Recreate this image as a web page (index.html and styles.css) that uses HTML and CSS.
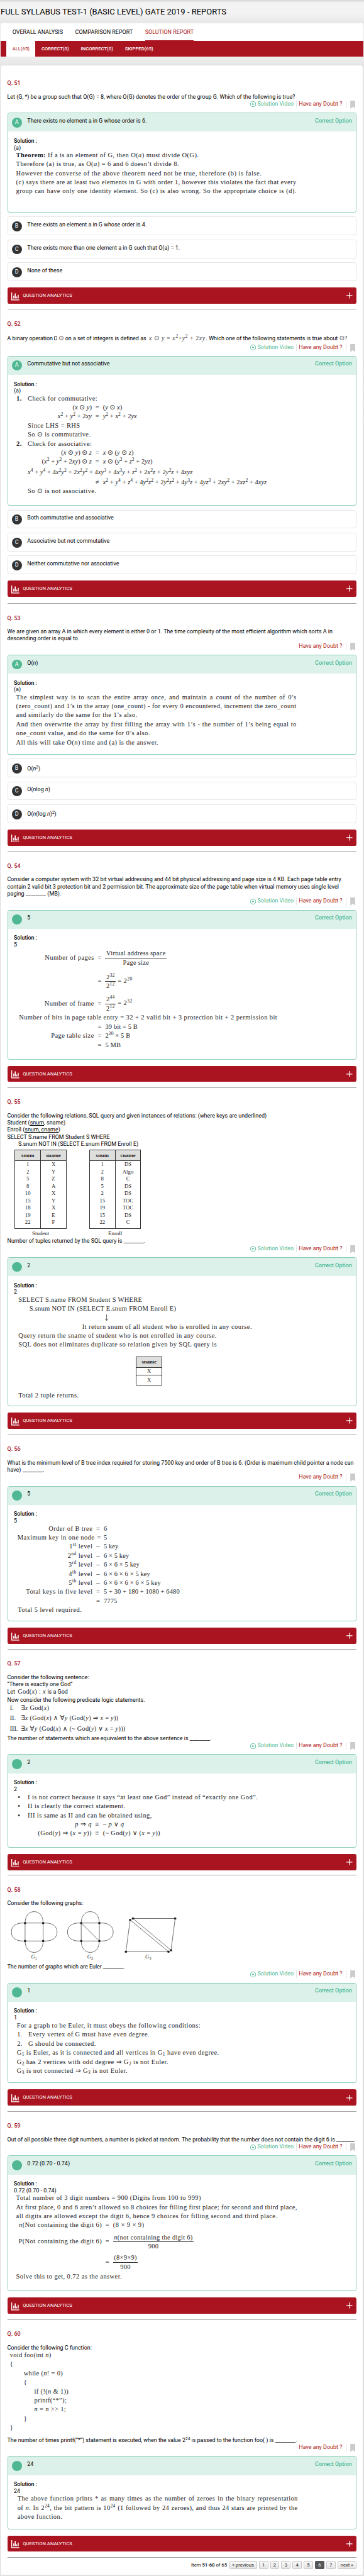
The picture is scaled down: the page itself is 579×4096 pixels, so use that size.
FILE: index.html
```html
<!DOCTYPE html>
<html lang="en">
<head>
<meta charset="utf-8">
<title>Full Syllabus Test-1 Reports</title>
<link rel="stylesheet" href="styles.css">
</head>
<body>
<svg class="sprite" aria-hidden="true">
  <symbol id="i-play" viewBox="0 0 18 18"><circle cx="9" cy="9" r="8" fill="none" stroke="#4fb892" stroke-width="1.8"/><path d="M6.6 5.600v6.800l6-3.400z" fill="#4fb892"/></symbol>
  <symbol id="i-mark" viewBox="0 0 16 25"><path d="M0 0h16v25l-8-5.500-8 5.500z" fill="#ccc"/></symbol>
  <symbol id="i-chart" viewBox="0 0 25 25"><path d="M0 0h2.600v22H25v2.800H0z M6 10h3v8.500H6z M10.600 3h3v15.500h-3z M15.200 12.500h3v6h-3z M19.800 7.500h3v11h-3z" fill="#fff"/></symbol>
  <symbol id="i-plus" viewBox="0 0 19 19"><path d="M9.500 0v19M0 9.500h19" stroke="#fff" stroke-width="2.400"/></symbol>
</svg>
<div class="page">
  <h1 class="title">FULL SYLLABUS TEST-1 (BASIC LEVEL) GATE 2019 - REPORTS</h1>
  <nav class="tabs"><a>OVERALL ANALYSIS</a><a>COMPARISON REPORT</a><a class="on">SOLUTION REPORT</a></nav>
  <nav class="filters"><a class="on">ALL(65)</a><a>CORRECT(0)</a><a>INCORRECT(0)</a><a>SKIPPED(65)</a></nav>
  <main class="sheet">

    <section class="q q51">
      <h2>Q. 51</h2>
      <div class="ask"><p>Let (G, *) be a group such that O(G) = 8, where O(G) denotes the order of the group G. Which of the following is true?</p></div>
      <div class="acts"><a class="video"><svg><use href="#i-play"/></svg>Solution Video</a><a class="doubt">Have any Doubt ?</a><svg class="mark"><use href="#i-mark"/></svg></div>
      <article class="card right">
        <header><b class="dot">A</b><span>There exists no element a in G whose order is 6.</span><em>Correct Option</em></header>
        <div class="sol"><strong>Solution :</strong><p>(a)</p>
          <div class="work">
            <p><b>Theorem:</b> If a is an element of G, then O(<i>a</i>) must divide O(G).</p>
            <p>Therefore (a) is true, as O(<i>a</i>) = 6 and 6 doesn’t divide 8.</p>
            <p class="even">However the converse of the above theorem need not be true, therefore (b) is false.</p>
            <p class="full">(c) says there are at least two elements in G with order 1, however this violates the fact that every</p>
            <p class="full">group can have only one identity element. So (c) is also wrong. So the appropriate choice is (d).</p>
          </div>
        </div>
      </article>
      <article class="card"><b class="dot">B</b><span>There exists an element a in G whose order is 4.</span></article>
      <article class="card"><b class="dot">C</b><span>There exists more than one element a in G such that O(a) = 1.</span></article>
      <article class="card"><b class="dot">D</b><span>None of these</span></article>
      <div class="stats"><svg class="chart"><use href="#i-chart"/></svg><span>QUESTION ANALYTICS</span><svg class="plus"><use href="#i-plus"/></svg></div>
    </section>

    <section class="q q52">
      <h2>Q. 52</h2>
      <div class="ask"><p>A binary operation <span class="tofu"></span> <span class="m">⊙</span> on a set of integers is defined as <span class="m def"><i>x</i> ⊙ <i>y</i> = <i>x</i><sup>2</sup>+<i>y</i><sup>2</sup> + 2<i>xy</i>.</span> Which one of the following statements is true about <span class="m">⊙?</span></p></div>
      <div class="acts"><a class="video"><svg><use href="#i-play"/></svg>Solution Video</a><a class="doubt">Have any Doubt ?</a><svg class="mark"><use href="#i-mark"/></svg></div>
      <article class="card right">
        <header><b class="dot">A</b><span>Commutative but not associative</span><em>Correct Option</em></header>
        <div class="sol"><strong>Solution :</strong><p>(a)</p>
          <div class="work">
            <p class="item"><b>1.</b>Check for commutative:</p>
            <div class="eq"><span>(<i>x</i> ⊙ <i>y</i>)</span><span>=</span><span>(<i>y</i> ⊙ <i>x</i>)</span></div>
            <div class="eq"><span><i>x</i><sup>2</sup> + <i>y</i><sup>2</sup> + 2<i>xy</i></span><span>=</span><span><i>y</i><sup>2</sup> + <i>x</i><sup>2</sup> + 2<i>yx</i></span></div>
            <p class="item">Since LHS = RHS</p>
            <p class="item">So ⊙ is commutative.</p>
            <p class="item"><b>2.</b>Check for associative:</p>
            <div class="eq"><span>(<i>x</i> ⊙ <i>y</i>) ⊙ <i>z</i></span><span>=</span><span><i>x</i> ⊙ (<i>y</i> ⊙ <i>z</i>)</span></div>
            <div class="eq"><span>(<i>x</i><sup>2</sup> + <i>y</i><sup>2</sup> + 2<i>xy</i>) ⊙ <i>z</i></span><span>=</span><span><i>x</i> ⊙ (<i>y</i><sup>2</sup> + <i>z</i><sup>2</sup> + 2<i>yz</i>)</span></div>
            <p class="item wide math"><i>x</i><sup>4</sup> + <i>y</i><sup>4</sup> + 4<i>x</i><sup>2</sup><i>y</i><sup>2</sup> + 2<i>x</i><sup>2</sup><i>y</i><sup>2</sup> + 4<i>xy</i><sup>3</sup> + 4<i>x</i><sup>3</sup><i>y</i> + <i>z</i><sup>2</sup> + 2<i>x</i><sup>2</sup><i>z</i> + 2<i>y</i><sup>2</sup><i>z</i> + 4<i>xyz</i></p>
            <div class="eq wide"><span></span><span>≠</span><span><i>x</i><sup>2</sup> + <i>y</i><sup>4</sup> + <i>z</i><sup>4</sup> + 4<i>y</i><sup>2</sup><i>z</i><sup>2</sup> + 2<i>y</i><sup>2</sup><i>z</i><sup>2</sup> + 4<i>y</i><sup>3</sup><i>z</i> + 4<i>yz</i><sup>3</sup> + 2<i>xy</i><sup>2</sup> + 2<i>xz</i><sup>2</sup> + 4<i>xyz</i></span></div>
            <p class="item">So ⊙ is not associative.</p>
          </div>
        </div>
      </article>
      <article class="card"><b class="dot">B</b><span>Both commutative and associative</span></article>
      <article class="card"><b class="dot">C</b><span>Associative but not commutative</span></article>
      <article class="card"><b class="dot">D</b><span>Neither commutative nor associative</span></article>
      <div class="stats"><svg class="chart"><use href="#i-chart"/></svg><span>QUESTION ANALYTICS</span><svg class="plus"><use href="#i-plus"/></svg></div>
    </section>

    <section class="q q53">
      <h2>Q. 53</h2>
      <div class="ask"><p>We are given an array A in which every element is either 0 or 1. The time complexity of the most efficient algorithm which sorts A in</p><p>descending order is equal to</p></div>
      <div class="acts"><a class="doubt">Have any Doubt ?</a><svg class="mark"><use href="#i-mark"/></svg></div>
      <article class="card right">
        <header><b class="dot">A</b><span>O(<i>n</i>)</span><em>Correct Option</em></header>
        <div class="sol"><strong>Solution :</strong><p>(a)</p>
          <div class="work">
            <p class="full">The simplest way is to scan the entire array once, and maintain a count of the number of 0’s</p>
            <p class="full">(zero_count) and 1’s in the array (one_count) - for every 0 encountered, increment the zero_count</p>
            <p>and similarly do the same for the 1’s also.</p>
            <p class="full">And then overwrite the array by first filling the array with 1’s - the number of 1’s being equal to</p>
            <p>one_count value, and do the same for 0’s also.</p>
            <p>All this will take O(<i>n</i>) time and (a) is the answer.</p>
          </div>
        </div>
      </article>
      <article class="card"><b class="dot">B</b><span class="low">O(<i>n</i><sup>2</sup>)</span></article>
      <article class="card"><b class="dot">C</b><span>O(<i>n</i>log <i>n</i>)</span></article>
      <article class="card"><b class="dot">D</b><span class="low">O(<i>n</i>(log <i>n</i>)<sup>2</sup>)</span></article>
      <div class="stats"><svg class="chart"><use href="#i-chart"/></svg><span>QUESTION ANALYTICS</span><svg class="plus"><use href="#i-plus"/></svg></div>
    </section>

    <section class="q q54">
      <h2>Q. 54</h2>
      <div class="ask"><p>Consider a computer system with 32 bit virtual addressing and 44 bit physical addressing and page size is 4 KB. Each page table entry</p><p>contain 2 valid bit 3 protection bit and 2 permission bit. The approximate size of the page table when virtual memory uses single level</p><p>paging ________ (MB).</p></div>
      <div class="acts"><a class="video"><svg><use href="#i-play"/></svg>Solution Video</a><a class="doubt">Have any Doubt ?</a><svg class="mark"><use href="#i-mark"/></svg></div>
      <article class="card right">
        <header><b class="dot"></b><span>5</span><em>Correct Option</em></header>
        <div class="sol"><strong>Solution :</strong><p>5</p>
          <div class="work">
            <div class="eq r1"><span>Number of pages</span><span>=</span><span><span class="frac"><span>Virtual address space</span><span>Page size</span></span></span></div>
            <div class="eq r2"><span></span><span>=</span><span><span class="frac"><span>2<sup>32</sup></span><span>2<sup>12</sup></span></span> = 2<sup>20</sup></span></div>
            <div class="eq r3"><span>Number of frame</span><span>=</span><span><span class="frac"><span>2<sup>44</sup></span><span>2<sup>12</sup></span></span> = 2<sup>32</sup></span></div>
            <p class="bits">Number of bits in page table entry = 32 + 2 valid bit + 3 protection bit + 2 permission bit</p>
            <div class="eq tight"><span></span><span>=</span><span>39 bit = 5 B</span></div>
            <div class="eq tight"><span>Page table size</span><span>=</span><span>2<sup>20</sup> × 5 B</span></div>
            <div class="eq tight"><span></span><span>=</span><span>5 MB</span></div>
          </div>
        </div>
      </article>
      <div class="stats"><svg class="chart"><use href="#i-chart"/></svg><span>QUESTION ANALYTICS</span><svg class="plus"><use href="#i-plus"/></svg></div>
    </section>

    <section class="q q55">
      <h2>Q. 55</h2>
      <div class="ask">
        <p>Consider the following relations, SQL query and given instances of relations: (where keys are underlined)</p>
        <p>Student (<u>snum</u>, sname)</p>
        <p>Enroll (<u>snum, cname</u>)</p>
        <p>SELECT S.name FROM Student S WHERE</p>
        <p class="in">S.snum NOT IN (SELECT E.snum FROM Enroll E)</p>
        <div class="rels">
          <figure><table><tr><th>snum</th><th>sname</th></tr><tr><td>1</td><td>X</td></tr><tr><td>2</td><td>Y</td></tr><tr><td>5</td><td>Z</td></tr><tr><td>8</td><td>A</td></tr><tr><td>10</td><td>X</td></tr><tr><td>15</td><td>Y</td></tr><tr><td>18</td><td>X</td></tr><tr><td>19</td><td>E</td></tr><tr><td>22</td><td>F</td></tr></table><figcaption>Student</figcaption></figure>
          <figure><table><tr><th>snum</th><th>cname</th></tr><tr><td>1</td><td>DS</td></tr><tr><td>2</td><td>Algo</td></tr><tr><td>8</td><td>C</td></tr><tr><td>5</td><td>DS</td></tr><tr><td>2</td><td>DS</td></tr><tr><td>15</td><td>TOC</td></tr><tr><td>19</td><td>TOC</td></tr><tr><td>15</td><td>DS</td></tr><tr><td>22</td><td>C</td></tr></table><figcaption>Enroll</figcaption></figure>
        </div>
        <p>Number of tuples returned by the SQL query is ________.</p>
      </div>
      <div class="acts"><a class="video"><svg><use href="#i-play"/></svg>Solution Video</a><a class="doubt">Have any Doubt ?</a><svg class="mark"><use href="#i-mark"/></svg></div>
      <article class="card right">
        <header><b class="dot"></b><span>2</span><em>Correct Option</em></header>
        <div class="sol"><strong>Solution :</strong><p>2</p>
          <div class="work">
            <p class="caps">SELECT S.name FROM Student S WHERE</p>
            <p class="caps in1">S.snum NOT IN (SELECT E.snum FROM Enroll E)</p>
            <svg class="down" viewBox="0 0 14 20"><path d="M7 0v19M2 13.500l5 5.500 5-5.500" fill="none" stroke="#333" stroke-width="1.500"/></svg>
            <p class="in2">It return snum of all student who is enrolled in any course.</p>
            <p>Query return the sname of student who is not enrolled in any course.</p>
            <p>SQL does not eliminates duplicate so relation given by SQL query is</p>
            <table class="mini"><tr><th>sname</th></tr><tr><td>X</td></tr><tr><td>X</td></tr></table>
            <p>Total 2 tuple returns.</p>
          </div>
        </div>
      </article>
      <div class="stats"><svg class="chart"><use href="#i-chart"/></svg><span>QUESTION ANALYTICS</span><svg class="plus"><use href="#i-plus"/></svg></div>
    </section>

    <section class="q q56">
      <h2>Q. 56</h2>
      <div class="ask"><p>What is the minimum level of B tree index required for storing 7500 key and order of B tree is 6. (Order is maximum child pointer a node can</p><p>have) ________.</p></div>
      <div class="acts"><a class="doubt">Have any Doubt ?</a><svg class="mark"><use href="#i-mark"/></svg></div>
      <article class="card right">
        <header><b class="dot"></b><span>5</span><em>Correct Option</em></header>
        <div class="sol"><strong>Solution :</strong><p>5</p>
          <div class="work">
            <div class="eq"><span>Order of B tree</span><span>=</span><span>6</span></div>
            <div class="eq near"><span>Maximum key in one node</span><span>=</span><span>5</span></div>
            <div class="eq"><span>1<sup>st</sup> level</span><span>–</span><span>5 key</span></div>
            <div class="eq"><span>2<sup>nd</sup> level</span><span>–</span><span>6 × 5 key</span></div>
            <div class="eq"><span>3<sup>rd</sup> level</span><span>–</span><span>6 × 6 × 5 key</span></div>
            <div class="eq"><span>4<sup>th</sup> level</span><span>–</span><span>6 × 6 × 6 × 5 key</span></div>
            <div class="eq"><span>5<sup>th</sup> level</span><span>–</span><span>6 × 6 × 6 × 6 × 5 key</span></div>
            <div class="eq"><span>Total keys in five level</span><span>=</span><span>5 + 30 + 180 + 1080 + 6480</span></div>
            <div class="eq"><span></span><span>=</span><span>7775</span></div>
            <p>Total 5 level required.</p>
          </div>
        </div>
      </article>
      <div class="stats"><svg class="chart"><use href="#i-chart"/></svg><span>QUESTION ANALYTICS</span><svg class="plus"><use href="#i-plus"/></svg></div>
    </section>

    <section class="q q57">
      <h2>Q. 57</h2>
      <div class="ask">
        <p>Consider the following sentence:</p>
        <p>“There is exactly one God”</p>
        <p class="let">Let <span class="m god">God(<i>x</i>) : <i>x</i></span> is a God</p>
        <p class="now">Now consider the following predicate logic statements.</p>
        <p class="m st"><span>I.</span>∃<i>x</i> God(<i>x</i>)</p>
        <p class="m st st2"><span>II.</span>∃<i>x</i> (God(<i>x</i>) ∧ ∀<i>y</i> (God(<i>y</i>) ⇒ <i>x</i> = <i>y</i>))</p>
        <p class="m st st3"><span>III.</span>∃<i>x</i> ∀<i>y</i> (God(<i>x</i>) ∧ (~ God(<i>y</i>) ∨ <i>x</i> = <i>y</i>)))</p>
        <p class="end">The number of statements which are equivalent to the above sentence is ________.</p>
      </div>
      <div class="acts"><a class="video"><svg><use href="#i-play"/></svg>Solution Video</a><a class="doubt">Have any Doubt ?</a><svg class="mark"><use href="#i-mark"/></svg></div>
      <article class="card right">
        <header><b class="dot"></b><span>2</span><em>Correct Option</em></header>
        <div class="sol"><strong>Solution :</strong><p>2</p>
          <div class="work">
            <p class="item"><b>•</b>I is not correct because it says “at least one God” instead of “exactly one God”.</p>
            <p class="item"><b>•</b>II is clearly the correct statement.</p>
            <p class="item"><b>•</b>III is same as II and can be obtained using,</p>
            <div class="eq"><span><i>p</i> ⇒ <i>q</i></span><span>≡</span><span>~ <i>p</i> ∨ <i>q</i></span></div>
            <div class="eq"><span>(God(<i>y</i>) ⇒ (<i>x</i> = <i>y</i>))</span><span>≡</span><span>(~ God(<i>y</i>) ∨ (<i>x</i> = <i>y</i>))</span></div>
          </div>
        </div>
      </article>
      <div class="stats"><svg class="chart"><use href="#i-chart"/></svg><span>QUESTION ANALYTICS</span><svg class="plus"><use href="#i-plus"/></svg></div>
    </section>

    <section class="q q58">
      <h2>Q. 58</h2>
      <div class="ask">
        <p>Consider the following graphs:</p>
        <svg class="graphs" viewBox="0 0 540 174.500">
          <g id="lobes" fill="none" stroke="#444" stroke-width="1.500">
            <path d="M54.300 48.200H110.400V103.900H54.300z"/>
            <path d="M54.300 48.200C54.300 28 65 12.800 82.300 12.800S110.400 28 110.400 48.200M54.300 103.900C54.300 124 65 139.300 82.300 139.300S110.400 124 110.400 103.900M54.300 48.200H46C25 48.200 11.800 59 11.800 76S25 103.900 46 103.900H54.300M110.400 48.200H119C140 48.200 153.500 59 153.500 76S140 103.900 119 103.900H110.400"/>
            <g fill="#222" stroke="none"><circle cx="54.300" cy="48.200" r="3.600"/><circle cx="110.400" cy="48.200" r="3.600"/><circle cx="54.300" cy="103.900" r="3.600"/><circle cx="110.400" cy="103.900" r="3.600"/></g>
          </g>
          <use href="#lobes" x="174.100"/>
          <g fill="none" stroke="#444" stroke-width="1.500"><path d="M228.400 48.200L284.500 103.900"/><path d="M388.800 34.100H519.700L506.800 132.500z M380 38.500L367 136.900H498.900z"/></g>
          <g fill="#222"><circle cx="388.800" cy="34.100" r="3.600"/><circle cx="519.700" cy="34.100" r="3.600"/><circle cx="506.800" cy="132.500" r="3.600"/><circle cx="380" cy="38.500" r="3.600"/><circle cx="367" cy="136.900" r="3.600"/><circle cx="498.900" cy="136.900" r="3.600"/></g>
          <text x="73" y="158.700">G<tspan class="idx" dy="4">1</tspan></text>
          <text x="247" y="158.700">G<tspan class="idx" dy="4">2</tspan></text>
          <text x="427" y="158.700">G<tspan class="idx" dy="4">3</tspan></text>
        </svg>
        <p>The number of graphs which are Euler ________.</p>
      </div>
      <div class="acts"><a class="video"><svg><use href="#i-play"/></svg>Solution Video</a><a class="doubt">Have any Doubt ?</a><svg class="mark"><use href="#i-mark"/></svg></div>
      <article class="card right">
        <header><b class="dot"></b><span>1</span><em>Correct Option</em></header>
        <div class="sol"><strong>Solution :</strong><p>1</p>
          <div class="work">
            <p>For a graph to be Euler, it must obeys the following conditions:</p>
            <p class="item"><span>1.</span>Every vertex of G must have even degree.</p>
            <p class="item"><span>2.</span>G should be connected.</p>
            <p>G<sub>1</sub> is Euler, as it is connected and all vertices in G<sub>1</sub> have even degree.</p>
            <p>G<sub>2</sub> has 2 vertices with odd degree ⇒ G<sub>2</sub> is not Euler.</p>
            <p>G<sub>3</sub> is not connected ⇒ G<sub>3</sub> is not Euler.</p>
          </div>
        </div>
      </article>
      <div class="stats"><svg class="chart"><use href="#i-chart"/></svg><span>QUESTION ANALYTICS</span><svg class="plus"><use href="#i-plus"/></svg></div>
    </section>

    <section class="q q59">
      <h2>Q. 59</h2>
      <div class="ask"><p>Out of all possible three digit numbers, a number is picked at random. The probability that the number does not contain the digit 6 is _______.</p></div>
      <div class="acts"><a class="video"><svg><use href="#i-play"/></svg>Solution Video</a><a class="doubt">Have any Doubt ?</a><svg class="mark"><use href="#i-mark"/></svg></div>
      <article class="card right">
        <header><b class="dot"></b><span>0.72 (0.70 - 0.74)</span><em>Correct Option</em></header>
        <div class="sol"><strong>Solution :</strong><p>0.72 (0.70 - 0.74)</p>
          <div class="work">
            <p>Total number of 3 digit numbers = 900 (Digits from 100 to 999)</p>
            <p class="full">At first place, 0 and 6 aren’t allowed so 8 choices for filling first place; for second and third place,</p>
            <p>all digits are allowed except the digit 6, hence 9 choices for filling second and third place.</p>
            <div class="eq"><span><i>n</i>(Not containing the digit 6)</span><span>=</span><span>(8 × 9 × 9)</span></div>
            <div class="eq r1"><span>P(Not containing the digit 6)</span><span>=</span><span><span class="frac"><span><i>n</i>(not containing the digit 6)</span><span>900</span></span></span></div>
            <div class="eq r2"><span></span><span>=</span><span><span class="frac"><span>(8×9×9)</span><span>900</span></span></span></div>
            <p class="solve">Solve this to get, 0.72 as the answer.</p>
          </div>
        </div>
      </article>
      <div class="stats"><svg class="chart"><use href="#i-chart"/></svg><span>QUESTION ANALYTICS</span><svg class="plus"><use href="#i-plus"/></svg></div>
    </section>

    <section class="q q60">
      <h2>Q. 60</h2>
      <div class="ask">
        <p>Consider the following C function:</p>
        <div class="code"><p>void foo(int <i>n</i>)</p><p>{</p><p class="c1">while (<i>n</i>! = 0)</p><p class="c1">{</p><p class="c2">if (!(<i>n</i> &amp; 1))</p><p class="c2">printf(“*”);</p><p class="c2"><i>n</i> = <i>n</i> &gt;&gt; 1;</p><p class="c1">}</p><p>}</p></div>
        <p>The number of times printf(“*”) statement is executed, when the value 2<sup>24</sup> is passed to the function foo( ) is ________.</p>
      </div>
      <div class="acts"><a class="doubt">Have any Doubt ?</a><svg class="mark"><use href="#i-mark"/></svg></div>
      <article class="card right">
        <header><b class="dot"></b><span>24</span><em>Correct Option</em></header>
        <div class="sol"><strong>Solution :</strong><p>24</p>
          <div class="work">
            <p class="full">The above function prints * as many times as the number of zeroes in the binary representation</p>
            <p class="full">of <i>n</i>. In 2<sup>24</sup>, the bit pattern is 10<sup>24</sup> (1 followed by 24 zeroes), and thus 24 stars are printed by the</p>
            <p>above function.</p>
          </div>
        </div>
      </article>
      <div class="stats"><svg class="chart"><use href="#i-chart"/></svg><span>QUESTION ANALYTICS</span><svg class="plus"><use href="#i-plus"/></svg></div>
    </section>

    <footer class="pager"><span>Item <b>51-60</b> of 65</span><a class="w1">« previous</a><a>1</a><a>2</a><a>3</a><a>4</a><a>5</a><a class="on">6</a><a>7</a><a class="w2">next »</a></footer>
  </main>
</div>
</body>
</html>
```
FILE: styles.css
```css
* { box-sizing: border-box; margin: 0; padding: 0; }
html { background: #e6e6e6; }
body { background: #e6e6e6; overflow: hidden; height: 4096px; }
.sprite { display: none; }
.page {
  zoom: .51315;
  width: 1128.3px;
  height: 7982px;
  overflow: hidden;
  display: flex;
  flex-direction: column;
  font: 400 17.480px/22px Roboto, "Liberation Sans", sans-serif;
  color: #000;
  background: linear-gradient(#d6d6d6, #f3f3f3 9px, #f3f3f3 40px, #e7e7e7 71px, #ededed 180px, #e6e6e6 202px, #e3e3e3);
}
.title { height: 71.600px; padding: 22px 0 0 2px; font-size: 25.300px; line-height: 32px; font-weight: 400; white-space: nowrap; }
.tabs { display: flex; gap: 38px; height: 54.400px; margin: 0 2px 0 1px; padding-left: 37.500px; background: #fff; border-radius: 5px 5px 0 0; }
.tabs a { padding-top: 19px; line-height: 23px; border-bottom: 3px solid transparent; white-space: nowrap; }
.tabs .on { color: #a81420; border-color: #a81420; }
.filters { display: flex; height: 50px; margin: 0 2px 0 1px; padding-left: 19px; background: #a91420; }
.filters a { padding: 0 18.500px; line-height: 50px; font-size: 15px; font-weight: 500; color: #fff; }
.filters .on { background: #fff; color: #a81420; font-weight: 400; }

.sheet { margin: 26px 3px 0 2px; height: 7776px; background: #fff; border-radius: 5px; box-shadow: 0 0 4px #ccc; }
.q { display: flex; flex-direction: column; margin: 0 20.500px; padding-bottom: 20px; border-bottom: 1.500px solid #a2a2a2; }
.q h2 { padding-top: 34px; margin-bottom: 20px; font-size: 17.500px; line-height: 22px; font-weight: 500; color: #a81420; }
.q51 h2 { padding-top: 45.500px; }
.ask { flex: 1 1 0; white-space: nowrap; }
.acts { display: flex; flex: none; justify-content: flex-end; height: 37.500px; line-height: 23px; white-space: nowrap; }
.video { display: flex; color: #4fb892; height: 22px; padding-right: 7px; border-right: 1px solid #e4e4e4; }
.video svg { width: 18px; height: 18px; margin: 3px 4.500px 0 0; }
.doubt { color: #a81420; width: 154.500px; height: 24px; padding-left: 7px; border-right: 1px solid #ddd; }
.mark { width: 16.500px; height: 25px; margin: 0 3.500px 0 11px; }

.card { display: flex; flex: none; height: 58px; margin-bottom: 13px; border: 1px solid #e6e6e6; border-radius: 6px; padding: 0 12px; }
.card > span, header > span { padding-top: 13px; white-space: nowrap; }
.card > .low { padding-top: 18px; }
.dot { flex: none; width: 31px; height: 31px; margin: 13px 17px 0 0; border-radius: 50%; background: #333; color: #fff; font-weight: 400; text-align: center; line-height: 31px; }
.right { display: block; padding: 0; border: 1px solid #8ccfb6; overflow: hidden; }
.right header { display: flex; height: 57px; padding: 0 12px; background: #dcf1e9; }
.right .dot { background: #4fb892; }
.right em { margin-left: auto; padding-top: 13px; font-size: 17.550px; font-style: normal; font-weight: 500; color: #4fb892; }
.sol { padding: 18.500px 0 0 18.500px; line-height: 21px; white-space: nowrap; }
.sol strong { font-size: 17.100px; font-weight: 500; }
.stats { display: flex; flex: none; height: 50px; margin-top: 6.600px; padding: 0 12px 0 13px; background: #a91420; border-radius: 6px; color: #fff; font-size: 15.050px; font-weight: 400; line-height: 50px; }
.chart { width: 25px; height: 25px; margin: 15px 10px 0 0; }
.plus { width: 19px; height: 19px; margin: 16px 0 0 auto; }

.work, .m, .code, .rels, .mini { font-family: "Liberation Serif", "DejaVu Sans", serif; font-weight: 400; color: #222; }
.work { margin-top: -1px; font-size: 20.500px; line-height: 28.100px; letter-spacing: .8px; padding-left: 7px; }
.work > p { height: 28.100px; }
.full { width: 869px; letter-spacing: .650px; text-align-last: justify; }
.even { letter-spacing: 1px; }
.work sup, .m sup, .ask sup, .card sup, .work sub { font-size: .72em; line-height: 0; vertical-align: .5em; }
.work sub { vertical-align: -.3em; }
.m { font-size: 20px; letter-spacing: .550px; line-height: 22px; }
.eq { display: grid; grid-template-columns: var(--lhs) 34.500px auto; height: 28.100px; margin-left: -7px; }
.eq > :nth-child(1) { text-align: right; }
.eq > :nth-child(2) { text-align: center; }
.item { padding-left: 36px; }
.item > b:first-child, .item > span:first-child { display: inline-block; width: 35px; margin-left: -35px; }
.frac { display: inline-flex; flex-direction: column; vertical-align: middle; text-align: center; line-height: 26px; letter-spacing: .500px; }
.frac > :first-child { border-bottom: 1.500px solid #333; padding: 0 3px; }

.q51 { height: 757.500px; } .q51 .right { height: 309.400px; }
.q52 { height: 911.500px; --lhs: 241.500px; } .q52 .right { height: 464px; }
.q53 { height: 768.500px; } .q53 .right { height: 309.400px; }
.q54 { height: 731.500px; --lhs: 249px; } .q54 .right { height: 463.800px; }
.q55 { height: 1076px; } .q55 .right { height: 462px; }
.q56 { height: 664.500px; --lhs: 244px; } .q56 .right { height: 419.600px; }
.q57 { height: 700.500px; --lhs: 241.500px; } .q57 .right { height: 289.400px; }
.q58 { height: 732px; } .q58 .right { height: 311.200px; }
.q59 { height: 644.500px; --lhs: 273px; } .q59 .right { height: 420px; }
.q60 { height: 737.500px; } .q60 .right { height: 226.500px; }

.q52 .ask { padding-top: 2px; }
.q52 .ask .m { font-size: 19.500px; letter-spacing: 0; color: #444; }
.q52 .ask .def { margin-left: 4px; letter-spacing: 1.100px; }
.tofu { display: inline-block; width: 9px; height: 13px; border: 1px solid #444; }
.q52 .wide { margin-top: 3.700px; }
.q52 .eq, .q52 .math { letter-spacing: .050px; }
.q54 .work .r1 { height: 62px; align-items: center; }
.q54 .work .r2 { height: 84px; align-items: center; }
.q54 .work .r3 { height: 52px; align-items: center; margin-bottom: 5px; }
.q54 .bits { padding-left: 9px; }
.q54 .tight > :last-child { letter-spacing: .200px; }
.q55 .in { padding-left: 34px; }
.rels { display: flex; gap: 70px; height: 279px; padding: 6px 0 0 23px; font-size: 17px; }
.rels table, .mini { border-collapse: collapse; border: 1.500px solid #333; }
.rels table { width: 161px; height: 242px; table-layout: fixed; }
.rels th, .rels td { border-right: 1.500px solid #333; text-align: center; line-height: 22.400px; }
.rels th, .mini th { height: 33px; background: #dededd; border-bottom: 1.500px solid #333; }
.rels tr:last-child td { padding-bottom: 7px; }
.rels figcaption { text-align: center; font-size: 17.500px; line-height: 28px; }
.q55 .work { padding-left: 14px; }
.work .caps { letter-spacing: .550px; }
.in1 { padding-left: 34px; }
.down { display: block; width: 14px; height: 20px; margin: 2px 0 5.500px 266px; }
.in2 { padding-left: 198px; }
.mini { width: 81px; margin: 21px 0 19px 365px; font-size: 17px; line-height: 22px; letter-spacing: 0; text-align: center; }
.mini td { border-bottom: 1.500px solid #333; }
.mini tr:last-child td { line-height: 29px; }
.q56 .work { padding-left: 12px; }
.q56 .eq { margin-left: -12px; }
.q56 .eq > :last-child { letter-spacing: .200px; }
.q56 .near { grid-template-columns: 250px 28.500px auto; }
.let { line-height: 24.500px; }
.god { margin: 0 1px 0 4px; }
.now { line-height: 25.500px; }
.st { padding-left: 8px; }
.st span { display: inline-block; width: 34px; letter-spacing: 0; }
.st2 { margin-top: 9px; }
.st3 { margin-top: 11px; }
.end { margin-top: 9px; }
.q57 .work { margin-top: 0; }
.q57 .item b { padding-left: 4px; }
.q57 .eq > :last-child { letter-spacing: .550px; }
.graphs { display: block; width: 540px; height: 174.500px; }
.graphs text { font: italic 17px "Liberation Serif", serif; fill: #333; }
.graphs .idx { font-size: 12px; font-style: normal; }
.q58 .work { padding-left: 9px; margin-top: 0; }
.q59 .work .r1 { height: 73px; align-items: center; }
.q59 .work .r2 { height: 53px; align-items: center; }
.q59 .solve { margin-top: 4px; }
.code { padding-left: 8px; margin: -2px 0 14px; font-size: 20.500px; line-height: 28.100px; letter-spacing: .600px; }
.c1 { padding-left: 43px; }
.c2 { padding-left: 76px; }
.q60 .work { padding-left: 11px; }

.pager { display: flex; justify-content: flex-end; gap: 6px; margin: 9px 20.500px 0; font-size: 15px; font-weight: 400; line-height: 26px; white-space: nowrap; }
.pager span { margin-right: 1px; }
.pager b { font-weight: 500; }
.pager a { width: 28.800px; height: 26px; line-height: 24px; text-align: center; border: 1px solid #c4c4c4; border-radius: 3px; background: linear-gradient(#fafafa, #e4e4e4); color: #222; }
.pager .w1 { width: 86px; }
.pager .w2 { width: 59px; }
.pager .on { background: #565656; border-color: #565656; color: #fff; }
```
